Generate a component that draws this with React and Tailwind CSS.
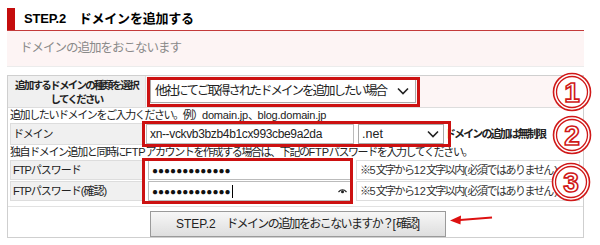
import React from "react";

function Circle({ n }) {
  return (
    <svg width="42" height="40" viewBox="0 0 42 40">
      <circle cx="21" cy="20" r="18.5" fill="white" stroke="#d01818" strokeWidth="1.6" />
      <circle cx="21" cy="20" r="15.5" fill="none" stroke="#d01818" strokeWidth="1.3" />
      <text
        x="21"
        y="30"
        textAnchor="middle"
        fontSize="28"
        fontWeight="bold"
        fontFamily="Liberation Sans, Arial, sans-serif"
        fill="white"
        stroke="#d01818"
        strokeWidth="1.6"
      >
        {n}
      </text>
    </svg>
  );
}

function Chevron() {
  return (
    <svg width="12" height="8" viewBox="0 0 12 8">
      <path d="M1 1.5 L6 6.5 L11 1.5" fill="none" stroke="#222" strokeWidth="1.6" />
    </svg>
  );
}

export default function App() {
  const font = { fontFamily: '"Liberation Sans", "Noto Sans CJK JP", sans-serif' };
  return (
    <div className="relative w-[600px] h-[245px] bg-white overflow-hidden text-[#333]" style={font}>
      <div className="pt-[8px] px-[7px] w-[591px]">
        {/* header */}
        <div className="flex h-[23px] border-b border-[#c43a3a]">
          <div className="w-[8px] bg-[#c40d0d]" />
          <div className="ml-[9px] text-[13px] font-bold text-black leading-[22px] tracking-[-0.2px]">
            STEP.2　ドメインを追加する
          </div>
        </div>
        <div className="h-[36px] bg-[#fdf4f4] border-b border-[#ececec] flex items-center pl-[13px] text-[12.5px] tracking-[-1px] text-[#8a8a8a]">
          ドメインの追加をおこないます
        </div>

        {/* form box */}
        <div className="mt-[8px] h-[163px] border border-[#cfcfcf] flex flex-col">
          <div className="flex h-[32px] border-b border-[#dddddd]">
            <div className="w-[138px] bg-[#f0f0f0] border-r border-[#dddddd] flex items-center justify-center text-center text-[10.5px] tracking-[-1.7px] font-bold leading-[14px] text-[#222]">
              追加するドメインの種類を選択
              <br />
              してください
            </div>
            <div className="flex-1 bg-[#fdf5f5] pl-[4px] pt-[3px]">
              <div className="w-[266px] h-[24px] bg-white border border-[#aaa] flex items-center justify-between pl-[4px] pr-[6px] text-[12.5px] tracking-[-2px] text-[#222] whitespace-nowrap">
                <span>他社にてご取得されたドメインを追加したい場合</span>
                <Chevron />
              </div>
            </div>
          </div>

          <div className="px-[2px] pt-[1px]">
            <div className="h-[13px] text-[11px] tracking-[-1.4px] leading-[13px] text-[#222] whitespace-nowrap">
              追加したいドメインをご入力ください。例）
              <span className="tracking-[-0.2px]">domain.jp</span>、
              <span className="tracking-[-0.2px]">blog.domain.jp</span>
            </div>
            <div className="flex h-[24px] items-center">
              <div className="w-[133px] h-[22px] bg-[#f0f0f0] border border-[#dddddd] flex items-center pl-[2px] text-[11px] tracking-[-1.2px] text-[#222]">
                ドメイン
              </div>
              <div className="ml-[3px] w-[208px] h-[20px] bg-white border border-[#bbb] flex items-center pl-[3px] text-[12px] tracking-[-0.35px] text-[#222]">
                xn--vckvb3bzb4b1cx993cbe9a2da
              </div>
              <div className="ml-[4px] w-[86px] h-[20px] bg-white border border-[#aaa] flex items-center justify-between pl-[3px] pr-[4px] text-[12.5px] text-[#222]">
                <span>.net</span>
                <Chevron />
              </div>
              <div className="ml-[1px] text-[11px] tracking-[-1.9px] font-bold text-[#222] whitespace-nowrap">
                ドメインの追加は無制限
              </div>
            </div>
            <div className="h-[13px] text-[11px] tracking-[-1.4px] leading-[13px] text-[#222] whitespace-nowrap overflow-hidden">
              独自ドメイン追加と同時に<span className="tracking-[-0.2px]">FTP</span>アカウントを作成する場合は、下記の
              <span className="tracking-[-0.2px]">FTP</span>パスワードを入力してください。
            </div>
            <div className="mt-[1px] flex flex-col gap-[1px]">
              {[
                ["FTPパスワード", "●●●●●●●●●●●●●", false],
                ["FTPパスワード(確認)", "●●●●●●●●●●●●●", true],
              ].map(([label, dots, eye]) => (
                <div key={label} className="flex h-[20px]">
                  <div className="w-[133px] bg-[#f0f0f0] border border-[#dddddd] flex items-center pl-[2px] text-[11px] tracking-[-1px] text-[#222]">
                    {label}
                  </div>
                  <div className="ml-[5px] w-[204px] bg-white border border-[#bbb] flex items-center justify-between pl-[3px] pr-[4px] text-[10px] text-[#111] tracking-[0px]">
                    <span className="flex items-center">
                      {dots}
                      {eye ? <span className="inline-block w-[1px] h-[13px] bg-black ml-[1px]" /> : null}
                    </span>
                    {eye ? (
                      <svg width="9" height="6" viewBox="0 0 9 6">
                        <path d="M0.5 4 Q4.5 -0.5 8.5 4" fill="none" stroke="#222" strokeWidth="1.2" />
                        <circle cx="4.5" cy="3.8" r="1.5" fill="#222" />
                      </svg>
                    ) : null}
                  </div>
                  <div className="ml-[4px] w-[224px] bg-white border border-[#dddddd] flex items-center pl-[3px] text-[11px] tracking-[-1.5px] text-[#333] whitespace-nowrap overflow-hidden">
                    ※<span className="tracking-[0px]">5</span>文字から<span className="tracking-[0px]">12</span>文字以内( 必須ではありません )
                  </div>
                </div>
              ))}
            </div>
          </div>

          <div className="mt-[5px] border-t border-[#e2e2e2] flex-1 pt-[4px]">
            <div className="ml-[142px] w-[296px] h-[26px] border border-[#9a9a9a] bg-gradient-to-b from-[#f7f7f7] to-[#dedede] flex items-center justify-center text-[12px] tracking-[-1.6px] text-[#222]">
              <span className="tracking-[0px]">STEP.2</span>　ドメインの追加をおこないますか？<span className="tracking-[0px]">[</span>確認<span className="tracking-[0px]">]</span>
            </div>
          </div>
        </div>
      </div>

      {/* annotation overlays */}
      <div className="absolute left-[147px] top-[77px] w-[273px] h-[30px] border-[3px] border-[#cc1111]" />
      <div className="absolute left-[142px] top-[121px] w-[309px] h-[26px] border-[3px] border-[#cc1111]" />
      <div className="absolute left-[142px] top-[158px] w-[211px] h-[46px] border-[3px] border-[#cc1111]" />
      <div className="absolute left-[551px] top-[72px]"><Circle n="1" /></div>
      <div className="absolute left-[551px] top-[115px]"><Circle n="2" /></div>
      <div className="absolute left-[550px] top-[162px]"><Circle n="3" /></div>
      <svg className="absolute left-[448px] top-[212px]" width="46" height="16" viewBox="0 0 46 16">
        <path d="M44 5.5 L12 8" stroke="#dd1111" strokeWidth="2.2" fill="none" />
        <path d="M2 8.5 L13 3.5 L12.5 12.5 Z" fill="#dd1111" />
      </svg>
    </div>
  );
}
